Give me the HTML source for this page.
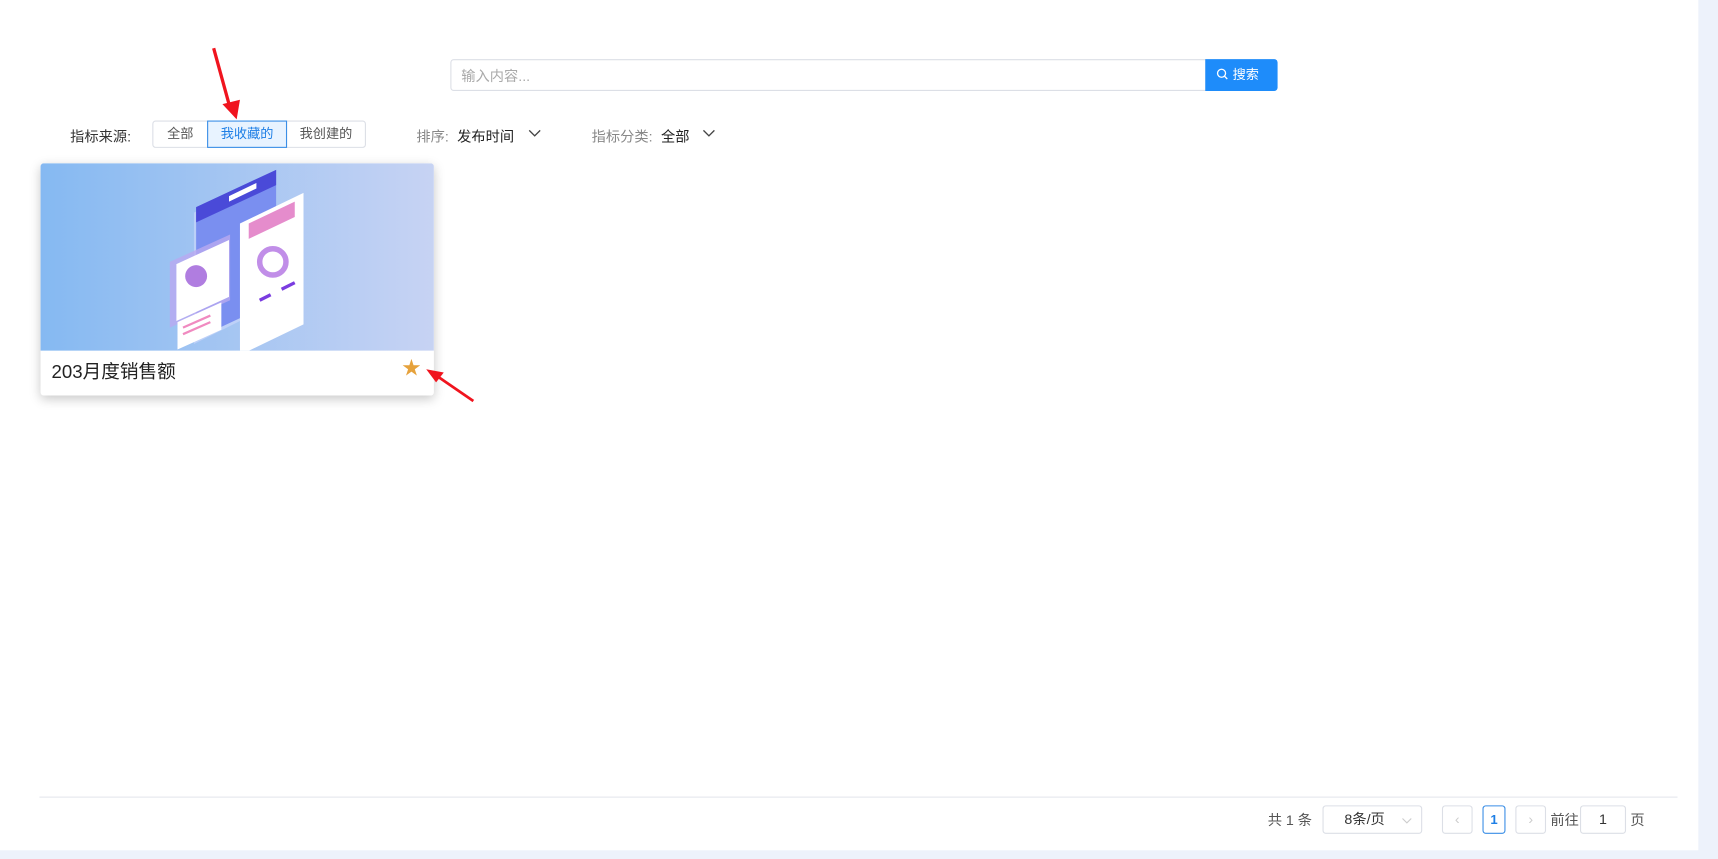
<!DOCTYPE html>
<html><head><meta charset="utf-8"><style>
*{box-sizing:border-box;margin:0;padding:0}
body{width:1718px;height:859px;background:#edf2fb;font-family:"Liberation Sans","Noto Sans CJK SC",sans-serif;position:relative;overflow:hidden;font-size:13px;color:#333}
#w{position:absolute;left:0;top:0;width:1568px;height:784px;transform:scale(1.0957);transform-origin:0 0}
.panel{position:absolute;left:0;top:0;width:1550px;height:776px;background:#fff}
.abs{position:absolute}
.search{left:411px;top:54px;width:690px;height:29px;border:1px solid #dcdfe6;border-radius:3px 0 0 3px;color:#aaa;padding:4px 9px;font-size:13px}
.sbtn{left:1100px;top:54px;width:66px;height:29px;background:#1e8cfa;border-radius:0 3px 3px 0;color:#fff;font-size:12px;line-height:28px;padding-left:10px}
.seg{top:110px;height:25px;border:1px solid #dcdfe6;font-size:12px;line-height:23px;text-align:center;color:#555}
.lbl{top:114px;font-size:13px}
.card{left:37px;top:149px;width:359px;height:212px;background:#fff;box-shadow:0 3px 10px rgba(0,0,0,.22);border-radius:3px;overflow:hidden}
.img{height:171px;background:linear-gradient(90deg,#85b9f2,#c7d3f3)}
.pg{border:1px solid #dcdfe6;border-radius:3px;height:26px;top:735px;font-size:13px;text-align:center;line-height:24px}
.pt{top:738px;color:#555}
</style></head><body><div id="w">
<div class="panel"></div>
<div class="abs search">输入内容...</div>
<div class="abs sbtn"><svg width="11" height="11" viewBox="0 0 12 12" style="vertical-align:-1px;margin-right:4px"><circle cx="5.3" cy="5.3" r="4" fill="none" stroke="#fff" stroke-width="1.3"/><path d="M8.3 8.3L11 11" stroke="#fff" stroke-width="1.3"/></svg>搜索</div>
<div class="abs lbl" style="left:64px;color:#333">指标来源:</div>
<div class="abs seg" style="left:139px;width:51px;border-radius:3px 0 0 3px">全部</div>
<div class="abs seg" style="left:189px;width:73px;border-color:#3a8ee6;background:#e8f3ff;color:#1e7fe6;z-index:2">我收藏的</div>
<div class="abs seg" style="left:261px;width:73px;border-radius:0 3px 3px 0">我创建的</div>
<div class="abs lbl" style="left:380px;color:#888">排序: <span style="color:#222;margin-left:4px">发布时间</span></div>
<div class="abs lbl" style="left:540px;color:#888">指标分类: <span style="color:#222;margin-left:4px">全部</span></div>
<svg class="abs" style="left:482px;top:118px" width="12" height="8"><path d="M1 1l5 5 5-5" fill="none" stroke="#444" stroke-width="1.2"/></svg>
<svg class="abs" style="left:641px;top:118px" width="12" height="8"><path d="M1 1l5 5 5-5" fill="none" stroke="#444" stroke-width="1.2"/></svg>
<div class="abs card"><div class="img">
<svg width="359" height="171" viewBox="0 0 359 171">
<path d="M140 45l60-30v120l-60 30z" fill="#c9d6fa" opacity=".7"/>
<path d="M142 40l73-34v120l-73 34z" fill="#7a8ff0"/>
<path d="M142 40l73-34v14l-73 34z" fill="#4a4ad8"/>
<path d="M172 30l25-12v5l-25 12z" fill="#fff"/>
<path d="M182 55l58-28v120l-58 28z" fill="#fff"/>
<path d="M190 55l42-20v14l-42 20z" fill="#e58ccc"/>
<circle cx="212" cy="90" r="12" fill="none" stroke="#c18ee8" stroke-width="5"/>
<path d="M200 125l10-5M220 115l12-6" stroke="#7a3ce0" stroke-width="3"/>
<path d="M118 90l55-25v60l-55 25z" fill="#b9a9f0" opacity=".8"/>
<path d="M124 92l48-22v52l-48 22z" fill="#fff"/>
<circle cx="142" cy="103" r="10" fill="#b07de0"/>
<path d="M125 145l40-18v25l-40 18z" fill="#fff"/>
<path d="M130 150l25-11M130 156l25-11" stroke="#f08ac0" stroke-width="2"/>
</svg></div>
<div style="padding:5px 10px;font-size:17px;color:#222">203月度销售额</div>
<div class="abs" style="right:12px;top:173px;color:#e6a23c;font-size:17px">★</div>
</div>
<svg class="abs" style="left:0;top:0" width="500" height="400">
<path d="M195 44L209 95" stroke="#f0141e" stroke-width="3"/><path d="M203 95l13 14 3-18z" fill="#f0141e"/>
<path d="M432 366L400 344" stroke="#f0141e" stroke-width="2.5"/><path d="M389 337l16 3-7 9z" fill="#f0141e"/>
</svg>
<div class="abs" style="left:36px;top:727px;width:1495px;height:1px;background:#e4e7ed"></div>
<div class="abs pt" style="left:1157px">共 1 条</div>
<div class="abs pg" style="left:1207px;width:91px;color:#333;text-align:left;padding-left:19px">8条/页<svg style="position:absolute;right:8px;top:10px" width="10" height="6"><path d="M1 1l4 4 4-4" fill="none" stroke="#ccc"/></svg></div>
<div class="abs pg" style="left:1316px;width:28px;color:#ccc">‹</div>
<div class="abs pg" style="left:1353px;width:21px;border-color:#3a8ee6;color:#1e7fe6;font-weight:bold;font-size:12px">1</div>
<div class="abs pg" style="left:1383px;width:28px;color:#ccc">›</div>
<div class="abs pt" style="left:1415px">前往</div>
<div class="abs pg" style="left:1442px;width:42px;color:#333">1</div>
<div class="abs pt" style="left:1488px">页</div>
</div></body></html>
